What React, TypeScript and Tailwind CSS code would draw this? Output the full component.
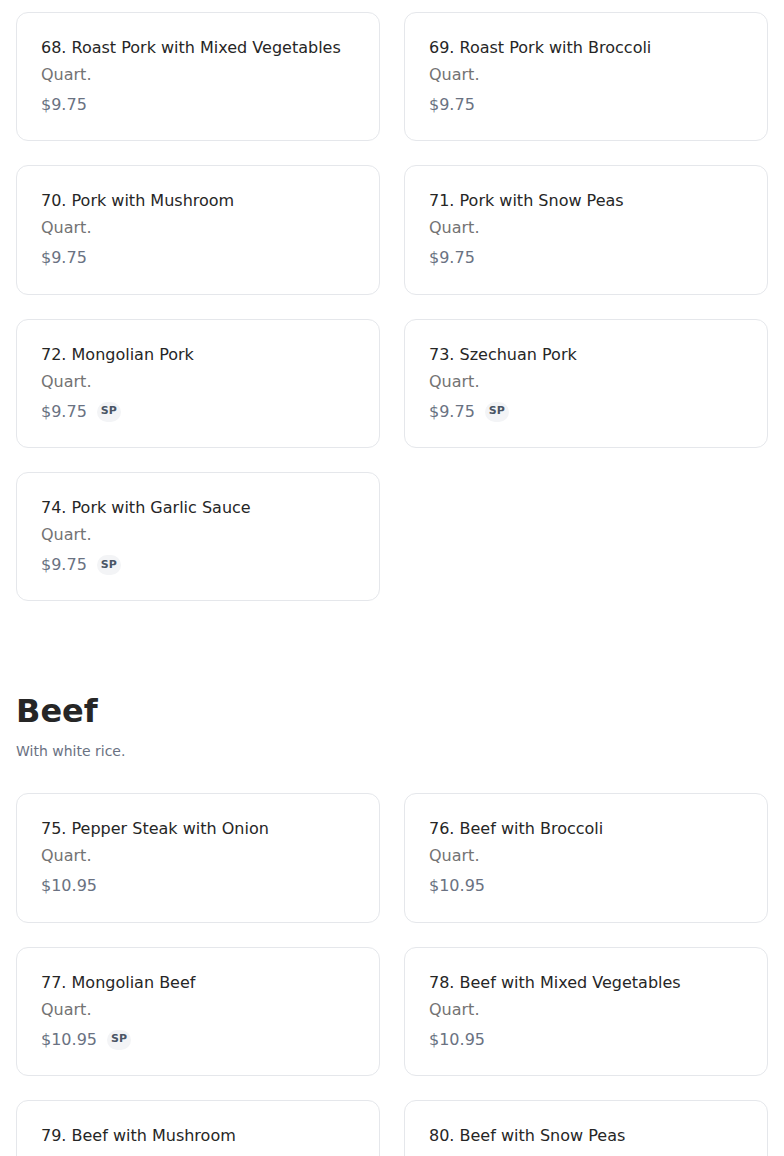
import React from 'react';

type Item = {
  name: string;
  size: string;
  price: string;
  spicy?: boolean;
};

const pork: Item[] = [
  { name: '68. Roast Pork with Mixed Vegetables', size: 'Quart.', price: '$9.75' },
  { name: '69. Roast Pork with Broccoli', size: 'Quart.', price: '$9.75' },
  { name: '70. Pork with Mushroom', size: 'Quart.', price: '$9.75' },
  { name: '71. Pork with Snow Peas', size: 'Quart.', price: '$9.75' },
  { name: '72. Mongolian Pork', size: 'Quart.', price: '$9.75', spicy: true },
  { name: '73. Szechuan Pork', size: 'Quart.', price: '$9.75', spicy: true },
  { name: '74. Pork with Garlic Sauce', size: 'Quart.', price: '$9.75', spicy: true },
];

const beef: Item[] = [
  { name: '75. Pepper Steak with Onion', size: 'Quart.', price: '$10.95' },
  { name: '76. Beef with Broccoli', size: 'Quart.', price: '$10.95' },
  { name: '77. Mongolian Beef', size: 'Quart.', price: '$10.95', spicy: true },
  { name: '78. Beef with Mixed Vegetables', size: 'Quart.', price: '$10.95' },
  { name: '79. Beef with Mushroom', size: 'Quart.', price: '$10.95' },
  { name: '80. Beef with Snow Peas', size: 'Quart.', price: '$10.95' },
];

const MenuCard: React.FC<{ item: Item }> = ({ item }) => (
  <div className="rounded-xl border border-gray-200 bg-white px-6 pt-6 pb-[23.33px]">
    <h3 className="text-base leading-[22px] text-neutral-800">{item.name}</h3>
    <p className="mt-1 text-base leading-6 text-neutral-500">{item.size}</p>
    <div className="mt-1.5 flex h-6 items-center gap-2.5">
      <span className="text-base leading-6 text-gray-500">{item.price}</span>
      {item.spicy && (
        <span className="flex h-5 items-center rounded-full bg-gray-100 px-1 text-[11px] font-bold text-gray-600">
          SP
        </span>
      )}
    </div>
  </div>
);

const App: React.FC = () => {
  return (
    <div className="min-h-screen bg-white px-4 font-['DejaVu_Sans',sans-serif]">
      {/* Pork (continued) */}
      <section className="pt-3 pb-12">
        <div className="grid grid-cols-2 gap-6">
          {pork.map((item) => (
            <MenuCard key={item.name} item={item} />
          ))}
        </div>
      </section>

      {/* Beef */}
      <section className="pt-[42px] pb-12">
        <h2 className="text-[32px] font-bold leading-10 text-neutral-800">Beef</h2>
        <p className="mt-2 text-sm leading-6 text-gray-500">With white rice.</p>
        <div className="mt-[30px] grid grid-cols-2 gap-6">
          {beef.map((item) => (
            <MenuCard key={item.name} item={item} />
          ))}
        </div>
      </section>
    </div>
  );
};

export default App;
